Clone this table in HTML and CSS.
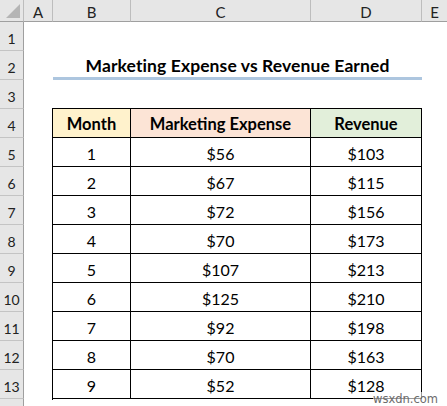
FILE: index.html
```html
<!DOCTYPE html>
<html>
<head>
<meta charset="utf-8">
<link rel="stylesheet" href="styles.css">
</head>
<body>
<div class="sheet">
  <div class="corner"><span class="tri"></span></div>
  <div class="colhead">A</div>
  <div class="colhead">B</div>
  <div class="colhead">C</div>
  <div class="colhead">D</div>
  <div class="colhead last">E</div>

  <div class="rowhead">1</div><div class="blank span5"></div>
  <div class="rowhead">2</div><div class="blank"></div><div class="title">Marketing Expense vs Revenue Earned</div><div class="blank"></div>
  <div class="rowhead">3</div><div class="blank span5"></div>
  <div class="rowhead">4</div>
  <div class="rowhead">5</div>
  <div class="rowhead">6</div>
  <div class="rowhead">7</div>
  <div class="rowhead">8</div>
  <div class="rowhead">9</div>
  <div class="rowhead">10</div>
  <div class="rowhead">11</div>
  <div class="rowhead">12</div>
  <div class="rowhead">13</div>
  <div class="rowhead"></div>

  <div class="table">
    <div class="cell th month">Month</div>
    <div class="cell th expense">Marketing Expense</div>
    <div class="cell th revenue">Revenue</div>
    <div class="cell">1</div><div class="cell">$56</div><div class="cell">$103</div>
    <div class="cell">2</div><div class="cell">$67</div><div class="cell">$115</div>
    <div class="cell">3</div><div class="cell">$72</div><div class="cell">$156</div>
    <div class="cell">4</div><div class="cell">$70</div><div class="cell">$173</div>
    <div class="cell">5</div><div class="cell">$107</div><div class="cell">$213</div>
    <div class="cell">6</div><div class="cell">$125</div><div class="cell">$210</div>
    <div class="cell">7</div><div class="cell">$92</div><div class="cell">$198</div>
    <div class="cell">8</div><div class="cell">$70</div><div class="cell">$163</div>
    <div class="cell">9</div><div class="cell">$52</div><div class="cell">$128</div>
  </div>
  <div class="watermark">wsxdn.com</div>
</div>
</body>
</html>
```

FILE: styles.css
```css
html, body {
  margin: 0;
  padding: 0;
  background: #ffffff;
}
body {
  font-family: Lato, "Open Sans", sans-serif;
  color: #000;
  width: 447px;
  height: 406px;
  overflow: hidden;
}
.sheet {
  position: relative;
  display: grid;
  grid-template-columns: 24px 29px 78px 180px 111px 25px;
  grid-template-rows: 22px repeat(14, 29px);
  height: 406px;
  overflow: hidden;
}
.corner {
  position: relative;
  background: #e6e6e6;
  border-right: 1px solid #bdbdbd;
  border-bottom: 1px solid #9f9f9f;
  box-sizing: border-box;
}
.tri {
  position: absolute;
  right: 3px;
  bottom: 3px;
  width: 0;
  height: 0;
  border-left: 14px solid transparent;
  border-bottom: 14px solid #b5b5b5;
}
.colhead {
  background: #e6e6e6;
  border-right: 1px solid #bdbdbd;
  border-bottom: 1px solid #9f9f9f;
  box-sizing: border-box;
  display: flex;
  align-items: center;
  justify-content: center;
  font-size: 15px;
  color: #222;
  padding-top: 2px;
}
.colhead.last {
  border-right: none;
}
.rowhead {
  grid-column: 1;
  background: #e6e6e6;
  border-right: 1px solid #9f9f9f;
  border-bottom: 1px solid #c4c4c4;
  box-sizing: border-box;
  display: flex;
  align-items: center;
  justify-content: center;
  font-size: 14px;
  color: #222;
  padding-top: 4px;
}
.blank {
  background: #fff;
}
.span5 {
  grid-column: 2 / 7;
}
.title {
  grid-column: 3 / 6;
  font-weight: 700;
  font-size: 17.5px;
  text-align: center;
  border-bottom: 3px solid #adc6df;
  box-sizing: border-box;
  padding-top: 4px;
  letter-spacing: 0.1px;
}
.table {
  grid-column: 3 / 6;
  grid-row: 5 / 15;
  display: grid;
  grid-template-columns: 78px 180px 111px;
  grid-template-rows: repeat(10, 29px);
  border-top: 1px solid #000;
  border-left: 1px solid #000;
  margin-top: -1px;
  margin-left: -1px;
  height: 291px;
}
.cell {
  border-right: 1px solid #000;
  border-bottom: 1px solid #000;
  box-sizing: border-box;
  display: flex;
  align-items: center;
  justify-content: center;
  font-size: 16px;
  padding-top: 2px;
}
.th {
  font-weight: 700;
  font-size: 16.5px;
}
.month { background: #fff2cc; }
.expense { background: #fce4d6; }
.revenue { background: #e2efda; }
.watermark {
  position: absolute;
  left: 373px;
  top: 392px;
  font-family: "DejaVu Sans", sans-serif;
  font-size: 11.5px;
  color: #6b6b6b;
  background: rgba(255,255,255,0.6);
}
```
